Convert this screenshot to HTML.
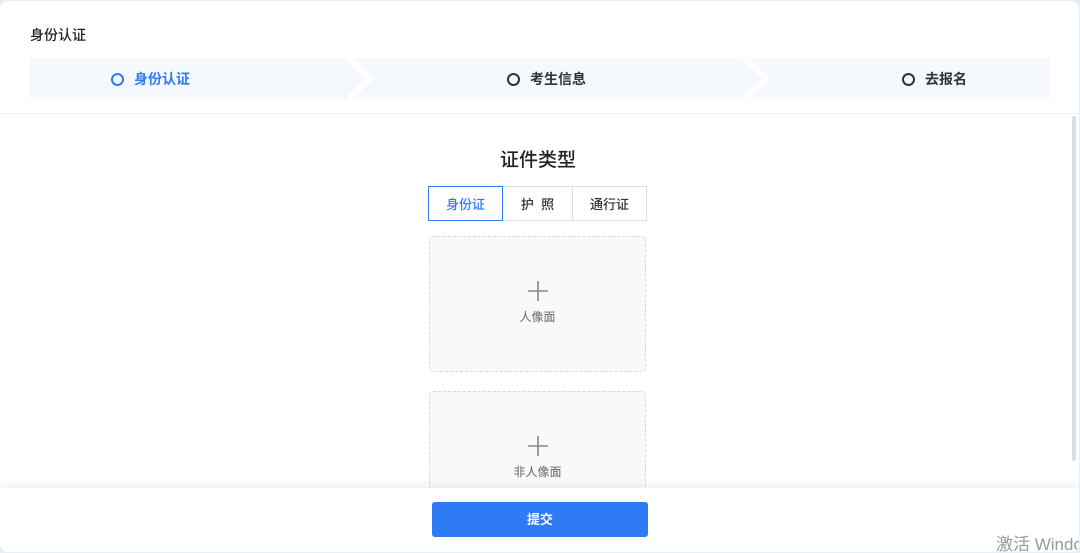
<!DOCTYPE html>
<html><head><meta charset="utf-8"><style>
*{margin:0;padding:0;box-sizing:border-box}
body{width:1080px;height:553px;overflow:hidden;background:#e9eef6;font-family:"Liberation Sans","Noto Sans CJK SC",sans-serif;position:relative}
.card{position:absolute;left:0;top:1px;width:1079px;height:551px;background:#fff;border-radius:8px;overflow:hidden}
.t{position:absolute;left:30px;top:24px;font-size:14px;color:#222;font-weight:500}
.steps{position:absolute;left:30px;top:57px;width:1020px;height:41px;background:#f5f8fd}
.st{position:absolute;top:11px;font-size:14px;font-weight:bold;color:#333;display:flex;align-items:center}
.st i{display:inline-block;width:13px;height:13px;border:2px solid #333;border-radius:50%;margin-right:10px}
.sep{position:absolute;top:112px;left:0;width:1079px;height:1px;background:#eee}
.h{position:absolute;left:0;width:1076px;text-align:center;top:144px;font-size:19px;color:#222;font-weight:500}
.tabs{position:absolute;left:428px;top:185px;display:flex}
.tabs div{height:35px;border:1px solid #ddd;font-size:13px;color:#333;font-weight:500;display:flex;align-items:center;justify-content:center;margin-left:-1px}
.up{position:absolute;left:429px;width:217px;height:136px;border:1px dashed #d8d8d8;border-radius:4px;background:#f9f9f9;text-align:center;color:#666;font-size:12px}
.up svg{display:block;margin:43px auto 6px}
.foot{position:absolute;left:0;top:487px;width:1079px;height:66px;background:#fff;box-shadow:0 -4px 8px rgba(0,0,0,.05)}
.btn{position:absolute;left:432px;top:14px;width:216px;height:35px;background:#2f7bf6;border-radius:3px;color:#fff;font-size:13px;font-weight:bold;text-align:center;line-height:35px}
.win{position:absolute;left:996px;top:529px;font-size:17px;color:#999;white-space:nowrap}
.scroll{position:absolute;left:1072px;top:115px;width:4px;height:345px;background:#ddd;border-radius:2px}
</style></head><body><div class="card">
<div class="t">身份认证</div>
<div class="steps">
<svg width="1020" height="41" style="position:absolute;left:0;top:0"><polyline points="318,0 340,20.5 318,41" fill="none" stroke="#fff" stroke-width="6"/><polyline points="714,0 736,20.5 714,41" fill="none" stroke="#fff" stroke-width="6"/></svg>
<div class="st" style="left:81px;color:#2f7bf6"><i style="border-color:#2f7bf6"></i>身份认证</div>
<div class="st" style="left:477px"><i></i>考生信息</div>
<div class="st" style="left:872px"><i></i>去报名</div>
</div>
<div class="sep"></div>
<div class="scroll"></div>
<div class="h">证件类型</div>
<div class="tabs"><div style="width:75px;border-color:#2f7bf6;color:#2f7bf6;position:relative;z-index:1;margin-left:0">身份证</div><div style="width:71px">护&nbsp;&nbsp;照</div><div style="width:75px">通行证</div></div>
<div class="up" style="top:235px"><svg width="22" height="22"><path d="M11 1V21M1 11H21" stroke="#888" stroke-width="1.6"/></svg>人像面</div>
<div class="up" style="top:390px"><svg width="22" height="22"><path d="M11 1V21M1 11H21" stroke="#888" stroke-width="1.6"/></svg>非人像面</div>
<div class="foot"><div class="btn">提交</div></div>
<div class="win">激活 Windo</div>
</div></body></html>
